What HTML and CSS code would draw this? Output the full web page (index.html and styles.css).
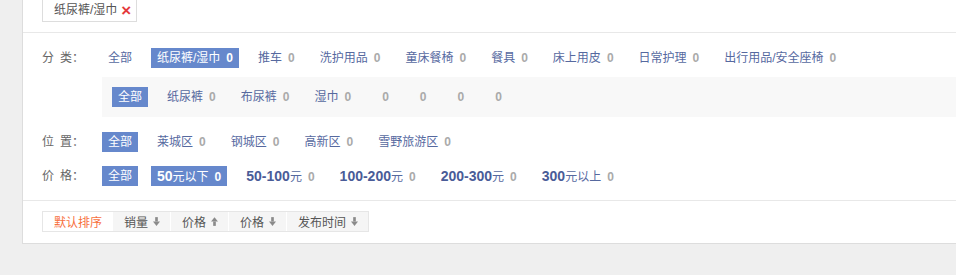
FILE: index.html
```html
<!DOCTYPE html>
<html lang="zh-CN">
<head>
    <meta charset="UTF-8">
    <meta name="viewport" content="width=device-width, initial-scale=1.0">
    <title>商品筛选</title>
    <link rel="stylesheet" href="styles.css">
</head>
<body>
    <div class="panel">
        <div class="crumbs">
            <span class="tag">纸尿裤/湿巾<span class="tag-close">×</span></span>
        </div>

        <div class="filter">
            <div class="row">
                <div class="label">分&ensp;类：</div>
                <div class="col">
                    <div class="items">
                        <a class="item">全部</a>
                        <a class="item active">纸尿裤/湿巾<span class="num">0</span></a>
                        <a class="item">推车<span class="num">0</span></a>
                        <a class="item">洗护用品<span class="num">0</span></a>
                        <a class="item">童床餐椅<span class="num">0</span></a>
                        <a class="item">餐具<span class="num">0</span></a>
                        <a class="item">床上用皮<span class="num">0</span></a>
                        <a class="item">日常护理<span class="num">0</span></a>
                        <a class="item">出行用品/安全座椅<span class="num">0</span></a>
                    </div>
                    <div class="sub">
                        <div class="items">
                            <a class="item active">全部</a>
                            <a class="item">纸尿裤<span class="num">0</span></a>
                            <a class="item">布尿裤<span class="num">0</span></a>
                            <a class="item">湿巾<span class="num">0</span></a>
                            <a class="item"><span class="num">0</span></a>
                            <a class="item"><span class="num">0</span></a>
                            <a class="item"><span class="num">0</span></a>
                            <a class="item"><span class="num">0</span></a>
                        </div>
                    </div>
                </div>
            </div>

            <div class="row row-place">
                <div class="label">位&ensp;置：</div>
                <div class="items">
                    <a class="item active">全部</a>
                    <a class="item">莱城区<span class="num">0</span></a>
                    <a class="item">钢城区<span class="num">0</span></a>
                    <a class="item">高新区<span class="num">0</span></a>
                    <a class="item">雪野旅游区<span class="num">0</span></a>
                </div>
            </div>

            <div class="row row-price">
                <div class="label">价&ensp;格：</div>
                <div class="items">
                    <a class="item active">全部</a>
                    <a class="item active"><b>50</b>元以下<span class="num">0</span></a>
                    <a class="item"><b>50-100</b>元<span class="num">0</span></a>
                    <a class="item"><b>100-200</b>元<span class="num">0</span></a>
                    <a class="item"><b>200-300</b>元<span class="num">0</span></a>
                    <a class="item"><b>300</b>元以上<span class="num">0</span></a>
                </div>
            </div>
        </div>

        <div class="sort">
            <div class="tabs">
                <a class="tab current">默认排序</a>
                <a class="tab">销量<svg class="arrow" viewBox="0 0 8 10"><rect x="2.5" y="0" width="3" height="5"/><polygon points="0,5 8,5 4,10"/></svg></a>
                <a class="tab">价格<svg class="arrow" viewBox="0 0 8 10"><polygon points="4,0 8,5 0,5"/><rect x="2.5" y="5" width="3" height="5"/></svg></a>
                <a class="tab">价格<svg class="arrow" viewBox="0 0 8 10"><rect x="2.5" y="0" width="3" height="5"/><polygon points="0,5 8,5 4,10"/></svg></a>
                <a class="tab">发布时间<svg class="arrow" viewBox="0 0 8 10"><rect x="2.5" y="0" width="3" height="5"/><polygon points="0,5 8,5 4,10"/></svg></a>
            </div>
        </div>
    </div>
</body>
</html>
```

FILE: styles.css
```css
html, body {
    margin: 0;
    background: #efefef;
}
body {
    font-family: "Liberation Sans", "Noto Sans CJK SC", sans-serif;
    font-size: 12px;
    color: #666;
}
a {
    text-decoration: none;
    cursor: pointer;
}
.panel {
    margin: -1px 0 0 22px;
    background: #fff;
    border-left: 1px solid #ddd;
    border-bottom: 1px solid #ddd;
}

/* 已选条件 */
.crumbs {
    padding: 0 0 10px 19px;
    border-bottom: 1px solid #e8e8e8;
}
.tag {
    display: inline-flex;
    align-items: center;
    height: 21px;
    padding: 0 5px 0 11px;
    border: 1px solid #ddd;
    color: #555;
    line-height: 21px;
}
.tag-close {
    margin-left: 4px;
    color: #e4393c;
    font-size: 17px;
    font-weight: bold;
}

/* 筛选 */
.filter {
    padding: 15px 0 14px 19px;
    border-bottom: 1px solid #e8e8e8;
}
.row {
    display: flex;
    align-items: flex-start;
}
.row-place {
    margin-top: 15px;
}
.row-price {
    margin-top: 14px;
}
.label {
    width: 60px;
    flex-shrink: 0;
    line-height: 20px;
    color: #666;
}
.col {
    flex: 1;
}
.items {
    display: flex;
    flex-wrap: wrap;
    gap: 0 13px;
}
.item {
    display: block;
    height: 20px;
    line-height: 20px;
    padding: 0 6px;
    color: #56699f;
    white-space: nowrap;
}
.item b {
    font-size: 14px;
    color: #4a5c98;
}
.item .num {
    margin-left: 6px;
    color: #aaa;
    font-weight: bold;
}
.item.active {
    background: #6688cc;
}
.item.active,
.item.active b,
.item.active .num {
    color: #fff;
}
.sub {
    margin-top: 9px;
    padding: 10px;
    background: #f8f8f8;
}

/* 排序 */
.sort {
    padding: 10px 0 11px 19px;
}
.tabs {
    display: inline-flex;
    border: 1px solid #e6e6e6;
}
.tab {
    display: flex;
    align-items: center;
    height: 19px;
    padding: 0 10px 0 11px;
    background: #f5f5f5;
    border-left: 1px solid #fff;
    color: #555;
}
.tab:first-child {
    border-left: none;
}
.tab.current {
    background: #fff;
    color: #f7703e;
}
.arrow {
    width: 7px;
    height: 9px;
    margin-left: 5px;
    fill: #8a8a8a;
}
```
